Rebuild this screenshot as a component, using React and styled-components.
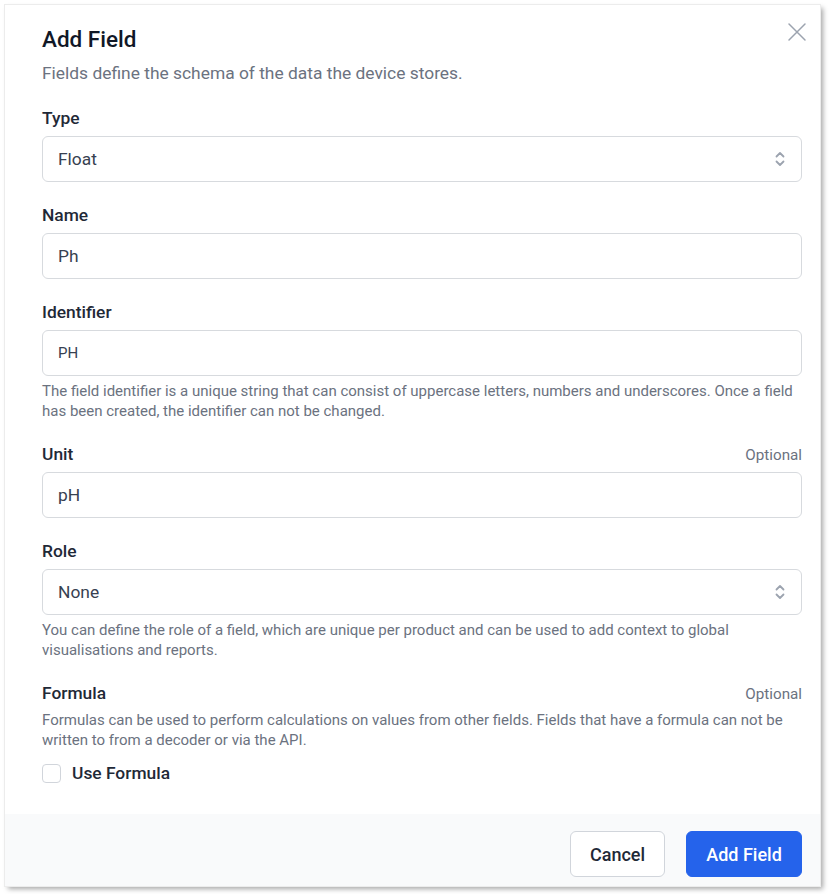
import React from "react"
import styled, { createGlobalStyle } from "styled-components"

const GlobalStyle = createGlobalStyle`
    html, body {
        margin: 0;
        padding: 0;
        background: #ffffff;
    }
    body {
        font-family: Roboto, "Liberation Sans", Arial, sans-serif;
        color: #1f2937;
    }
    * { box-sizing: border-box; }
`;

// Styled Components
const Page = styled.div`
    width: 829px;
    height: 894px;
    padding: 5px 9px 8px 5px;
`;

const Dialog = styled.div`
    position: relative;
    width: 815px;
    height: 881px;
    background: #ffffff;
    display: flex;
    flex-direction: column;
    box-shadow: 0 0 0 1px #ececec, 3px 3px 5px rgba(0, 0, 0, 0.35);
`;

const Body = styled.div`
    flex: 1;
    padding: 20px 18px 0 37px;
    display: flex;
    flex-direction: column;
`;

const CloseButton = styled.button`
    position: absolute;
    top: 15px;
    right: 11px;
    width: 24px;
    height: 24px;
    padding: 0;
    border: none;
    background: none;
    display: flex;
    align-items: center;
    justify-content: center;
    color: #9ca3af;
`;

const Title = styled.h2`
    margin: 0;
    font-size: 22.5px;
    line-height: 28px;
    font-weight: 500;
    color: #111827;
`;

const Subtitle = styled.p`
    margin: 8px 0 0;
    font-size: 17.4px;
    line-height: 24px;
    color: #6b7280;
`;

const Field = styled.div`
    margin-top: 21px;
    display: flex;
    flex-direction: column;
`;

const LabelRow = styled.div`
    display: flex;
    justify-content: space-between;
    align-items: baseline;
    height: 24px;
`;

const Label = styled.label`
    font-size: 17.4px;
    line-height: 24px;
    font-weight: 500;
    color: #1f2937;
`;

const Optional = styled.span`
    font-size: 15.2px;
    line-height: 20px;
    color: #6b7280;
`;

const Control = styled.div`
    margin-top: 6px;
    height: 46px;
    border: 1px solid #d7dade;
    border-radius: 6px;
    padding: 0 15px;
    display: flex;
    align-items: center;
    justify-content: space-between;
    font-size: ${p => p.small ? "15px" : "17.4px"};
    color: #374151;
    background: #ffffff;
`;

const Help = styled.p`
    margin: 5px 0 0;
    font-size: 15px;
    line-height: 20px;
    color: #6b7280;
`;

const CheckRow = styled.label`
    margin-top: 11px;
    display: flex;
    align-items: center;
    gap: 11px;
    font-size: 17.4px;
    line-height: 24px;
    font-weight: 500;
    color: #1f2937;
`;

const Box = styled.span`
    width: 19px;
    height: 19px;
    border: 1px solid #d1d5db;
    border-radius: 4px;
    background: #ffffff;
`;

const Footer = styled.div`
    height: 72px;
    background: #f9fafb;
    padding: 17px 18px 0 0;
    display: flex;
    justify-content: flex-end;
    gap: 21px;
`;

const Button = styled.button`
    height: 46px;
    width: ${p => p.primary ? "116px" : "95px"};
    padding: 0;
    border-radius: 6px;
    font-family: inherit;
    font-size: 18px;
    font-weight: 500;
    border: 1px solid ${p => p.primary ? "#2563eb" : "#d1d5db"};
    background: ${p => p.primary ? "#2563eb" : "#ffffff"};
    color: ${p => p.primary ? "#ffffff" : "#1f2937"};
`;

const Chevrons = () => (
    <svg width="12" height="18" viewBox="0 0 12 18" fill="none" stroke="#9ca3af" strokeWidth="1.8" strokeLinecap="round" strokeLinejoin="round">
        <path d="M2.5 6.5 L6 3 L9.5 6.5" />
        <path d="M2.5 11.5 L6 15 L9.5 11.5" />
    </svg>
)

const FormField = ({ label, optional, value, select, small, help }) => (
    <Field>
        <LabelRow>
            <Label>{label}</Label>
            {optional && <Optional>Optional</Optional>}
        </LabelRow>
        {value !== undefined && (
            <Control small={small}>
                <span>{value}</span>
                {select && <Chevrons />}
            </Control>
        )}
        {help && <Help>{help}</Help>}
    </Field>
)

export default function App() {
    return (
        <Page>
            <GlobalStyle />
            <Dialog>
                <CloseButton aria-label="Close">
                    <svg width="20" height="20" viewBox="0 0 20 20" stroke="currentColor" strokeWidth="1.5" strokeLinecap="round">
                        <path d="M2 2 L18 18 M18 2 L2 18" />
                    </svg>
                </CloseButton>
                <Body>
                    <Title>Add Field</Title>
                    <Subtitle>Fields define the schema of the data the device stores.</Subtitle>

                    <FormField label="Type" value="Float" select />
                    <FormField label="Name" value="Ph" />
                    <FormField
                        label="Identifier"
                        value="PH"
                        small
                        help="The field identifier is a unique string that can consist of uppercase letters, numbers and underscores. Once a field has been created, the identifier can not be changed."
                    />
                    <FormField label="Unit" optional value="pH" />
                    <FormField
                        label="Role"
                        value="None"
                        select
                        help="You can define the role of a field, which are unique per product and can be used to add context to global visualisations and reports."
                    />
                    <FormField
                        label="Formula"
                        optional
                        help="Formulas can be used to perform calculations on values from other fields. Fields that have a formula can not be written to from a decoder or via the API."
                    />
                    <CheckRow>
                        <Box />
                        Use Formula
                    </CheckRow>
                </Body>
                <Footer>
                    <Button>Cancel</Button>
                    <Button primary>Add Field</Button>
                </Footer>
            </Dialog>
        </Page>
    )
}
